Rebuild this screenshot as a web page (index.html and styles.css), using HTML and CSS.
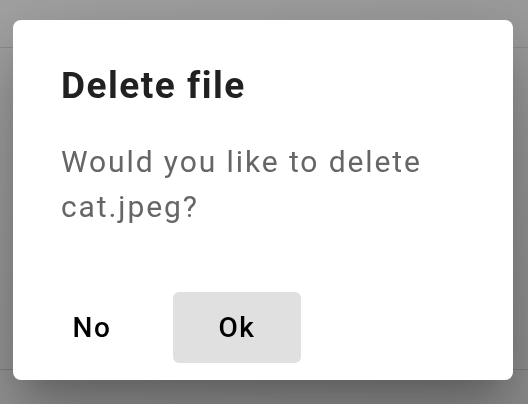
FILE: index.html
```html
<!DOCTYPE html>
<html>
<head>
<meta charset="utf-8">
<link rel="stylesheet" href="styles.css">
</head>
<body>
<div class="page">
  <div class="appbar"></div>
  <div class="content"></div>
  <div class="footer"></div>
</div>
<div class="overlay">
  <div class="dialog" role="dialog">
    <h2 class="dialog-title">Delete file</h2>
    <p class="dialog-text">Would you like to delete cat.jpeg?</p>
    <div class="dialog-actions">
      <button class="btn">No</button>
      <button class="btn btn-filled">Ok</button>
    </div>
  </div>
</div>
</body>
</html>
```

FILE: styles.css
```css
html, body {
  margin: 0;
  padding: 0;
  width: 528px;
  height: 404px;
  overflow: hidden;
}

body {
  font-family: Roboto, "Liberation Sans", sans-serif;
  background: linear-gradient(160deg, #a3a3a3 0%, #9a9a9a 45%, #8e8e8e 100%);
}

.page {
  display: flex;
  flex-direction: column;
  height: 404px;
}

.appbar {
  height: 47px;
  border-bottom: 1px solid #8c8c8c;
}

.content {
  flex: 1;
}

.footer {
  height: 34px;
  border-top: 1px solid #7e7e7e;
}

.overlay {
  position: fixed;
  inset: 0;
  display: flex;
  align-items: flex-start;
  padding: 20px 0 0 13px;
}

.dialog {
  width: 500px;
  height: 360px;
  box-sizing: border-box;
  background: #ffffff;
  border-radius: 8px;
  display: flex;
  flex-direction: column;
  box-shadow: 0 22px 30px -14px rgba(0, 0, 0, 0.2),
              0 48px 76px 6px rgba(0, 0, 0, 0.14),
              0 18px 92px 16px rgba(0, 0, 0, 0.12);
}

.dialog-title {
  margin: 0;
  padding: 37px 30px 0 48px;
  font-size: 37px;
  font-weight: 700;
  line-height: 58px;
  color: #212121;
  letter-spacing: 1.5px;
}

.dialog-text {
  margin: 24px 0 0;
  padding: 0 30px 0 48px;
  font-size: 30px;
  line-height: 45px;
  color: #666666;
  font-weight: 400;
  letter-spacing: 1.9px;
}

.dialog-actions {
  margin-top: auto;
  display: flex;
  gap: 17px;
  padding: 0 16px 17px 15px;
}

.btn {
  width: 128px;
  height: 71px;
  border: none;
  border-radius: 6px;
  background: transparent;
  font-family: Roboto, "Liberation Sans", sans-serif;
  font-size: 28px;
  font-weight: 500;
  letter-spacing: 1.5px;
  color: #000000;
  padding: 0;
}

.btn-filled {
  background: #e0e0e0;
}
```
